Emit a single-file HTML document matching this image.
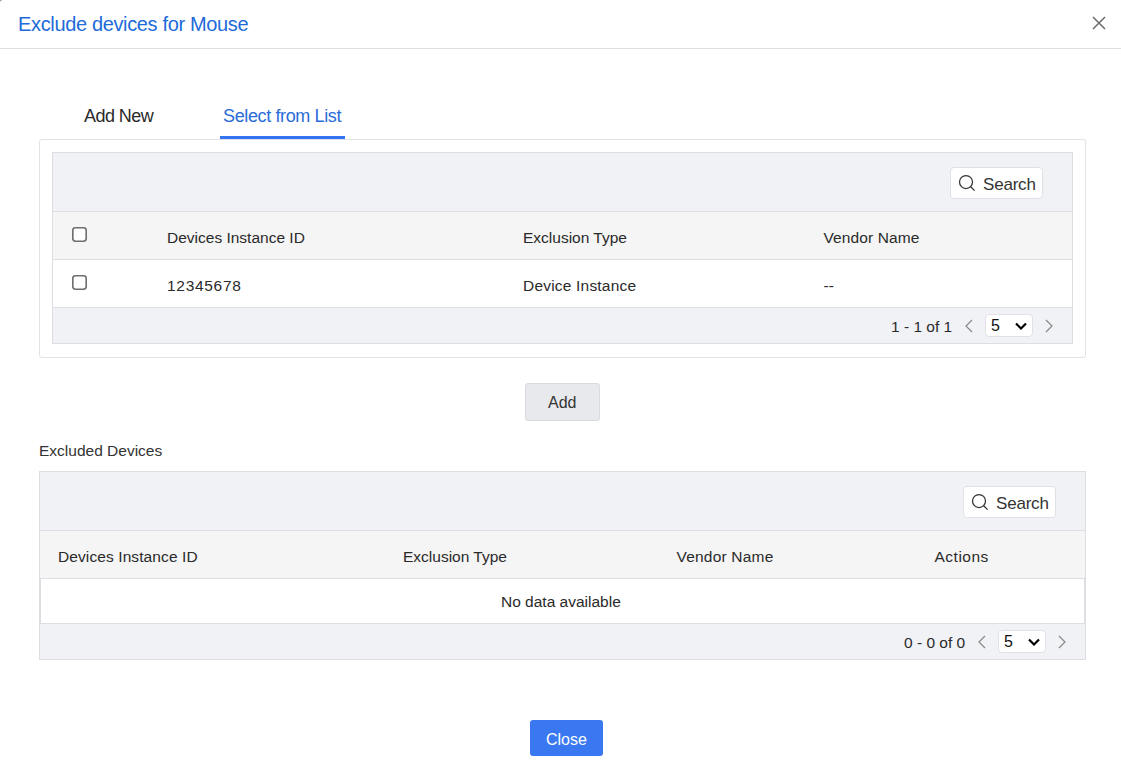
<!DOCTYPE html>
<html>
<head>
<meta charset="utf-8">
<style>
html,body{margin:0;padding:0;}
body{width:1121px;height:782px;overflow:hidden;background:#8e939c;position:relative;font-family:"Liberation Sans",sans-serif;color:#333;}
.modal{position:absolute;left:0;top:0;width:1121px;height:782px;background:#fff;border-top-left-radius:3px;}
.abs{position:absolute;white-space:nowrap;}
.t{position:absolute;white-space:nowrap;line-height:1;}
.hdrline{position:absolute;left:0;top:48px;width:1121px;height:1px;background:#dcdee4;}
.title{left:18px;top:14px;font-size:20px;letter-spacing:-0.35px;color:#216bd9;}
.closex{position:absolute;left:1091px;top:15px;width:16px;height:16px;}
.tab{font-size:18px;}
.tabline{position:absolute;left:220px;top:136px;width:125px;height:3px;background:#3474f0;}
.card{position:absolute;left:39px;top:139px;width:1045px;height:217px;border:1px solid #e1e3e8;border-radius:3px;background:#fff;}
.tbl{position:absolute;border:1px solid #dcdee3;box-sizing:border-box;}
.bar{position:absolute;left:0;width:100%;background:#f1f2f6;}
.head{position:absolute;left:0;width:100%;background:#f5f5f5;border-top:1px solid #dcdee3;border-bottom:1px solid #dcdee3;box-sizing:border-box;}
.row{position:absolute;background:#fff;box-sizing:border-box;}
.cb{position:absolute;width:15px;height:15px;}
.search{position:absolute;width:91px;height:30px;border:1px solid #dfe1e6;border-radius:4px;background:#fff;}
.search svg{position:absolute;left:7px;top:6px;}
.search span{position:absolute;left:32px;top:8px;font-size:17px;letter-spacing:-0.2px;line-height:1;color:#333;}
.cell{font-size:15.5px;color:#2a2a2a;}
.sel{position:absolute;width:46px;height:21px;border:1px solid #dfe1e6;border-radius:4px;background:#fff;}
.sel span{position:absolute;left:5px;top:3px;font-size:16px;line-height:1;color:#111;}
.btn-add{position:absolute;left:525px;top:383px;width:73px;height:36px;border:1px solid #d8dadf;border-radius:3px;background:#e8e9ed;}
.btn-close{position:absolute;left:530px;top:720px;width:73px;height:36px;border-radius:3px;background:#3a78f2;}
</style>
</head>
<body>
<div class="modal">
  <div class="t title">Exclude devices for Mouse</div>
  <svg class="closex" viewBox="0 0 16 16"><path d="M2 2 L14 14 M14 2 L2 14" stroke="#6b6b6b" stroke-width="1.5" fill="none"/></svg>
  <div class="hdrline"></div>

  <div class="t tab" style="left:84px;top:107px;letter-spacing:-0.55px;color:#2a2a2a;">Add New</div>
  <div class="t tab" style="left:223px;top:107px;letter-spacing:-0.37px;color:#2a6cd8;">Select from List</div>
  <div class="tabline"></div>

  <div class="card"></div>
  <!-- upper table -->
  <div class="tbl" style="left:52px;top:152px;width:1021px;height:192px;background:#f1f2f6;">
    <div class="head" style="top:58px;height:49px;"></div>
    <div class="row" style="left:0;top:107px;width:1019px;height:48px;border-bottom:1px solid #dcdee3;"></div>
    <div class="search" style="left:897px;top:14px;">
      <svg width="20" height="20" viewBox="0 0 20 20"><circle cx="8" cy="8" r="6.5" stroke="#333" stroke-width="1.25" fill="none"/><path d="M12.7 12.7 L16.6 16.6" stroke="#333" stroke-width="1.3"/></svg>
      <span>Search</span>
    </div>
  </div>
  <div class="cb" style="left:72px;top:227px;"><svg width="15" height="15" viewBox="0 0 15 15"><rect x="0.8" y="0.8" width="13.4" height="13.4" rx="2.6" fill="#fff" stroke="#6e6e6e" stroke-width="1.6"/></svg></div>
  <div class="cb" style="left:72px;top:275px;"><svg width="15" height="15" viewBox="0 0 15 15"><rect x="0.8" y="0.8" width="13.4" height="13.4" rx="2.6" fill="#fff" stroke="#6e6e6e" stroke-width="1.6"/></svg></div>
  <div class="t cell" style="left:167px;top:230px;">Devices Instance ID</div>
  <div class="t cell" style="left:523px;top:230px;">Exclusion Type</div>
  <div class="t cell" style="left:823.5px;top:230px;letter-spacing:0.1px;">Vendor Name</div>
  <div class="t cell" style="left:167px;top:278px;letter-spacing:0.7px;">12345678</div>
  <div class="t cell" style="left:523px;top:278px;letter-spacing:0.2px;">Device Instance</div>
  <div class="t cell" style="left:823.5px;top:278px;">--</div>
  <div class="t cell" style="left:891px;top:319px;">1 - 1 of 1</div>
  <svg class="abs" style="left:964px;top:318px;" width="10" height="16" viewBox="0 0 10 16"><path d="M8 2 L2 8 L8 14" stroke="#888" stroke-width="1.2" fill="none"/></svg>
  <div class="sel" style="left:985px;top:314px;"><span>5</span>
    <svg class="abs" style="left:29px;top:6.5px;" width="12" height="8" viewBox="0 0 12 8"><path d="M1 1.5 L6 6.5 L11 1.5" stroke="#000" stroke-width="2.2" fill="none"/></svg>
  </div>
  <svg class="abs" style="left:1044px;top:318px;" width="10" height="16" viewBox="0 0 10 16"><path d="M2 2 L8 8 L2 14" stroke="#888" stroke-width="1.2" fill="none"/></svg>

  <div class="btn-add"></div>
  <div class="t" style="left:548px;top:395px;font-size:16px;color:#333;">Add</div>

  <div class="t" style="left:39px;top:443px;font-size:15.5px;color:#333;">Excluded Devices</div>

  <!-- lower table -->
  <div class="tbl" style="left:39px;top:471px;width:1047px;height:189px;background:#f1f2f6;">
    <div class="head" style="top:58px;height:49px;"></div>
    <div class="row" style="left:0;top:107px;width:1045px;height:45px;border:1px solid #dcdee3;border-top:none;"></div>
    <div class="search" style="left:923px;top:14px;">
      <svg width="20" height="20" viewBox="0 0 20 20"><circle cx="8" cy="8" r="6.5" stroke="#333" stroke-width="1.25" fill="none"/><path d="M12.7 12.7 L16.6 16.6" stroke="#333" stroke-width="1.3"/></svg>
      <span>Search</span>
    </div>
  </div>
  <div class="t cell" style="left:58px;top:549px;letter-spacing:0.1px;">Devices Instance ID</div>
  <div class="t cell" style="left:403px;top:549px;">Exclusion Type</div>
  <div class="t cell" style="left:676.5px;top:549px;letter-spacing:0.2px;">Vendor Name</div>
  <div class="t cell" style="left:934.5px;top:549px;letter-spacing:0.5px;">Actions</div>
  <div class="t cell" style="left:501px;top:594px;">No data available</div>
  <div class="t cell" style="left:904px;top:635px;">0 - 0 of 0</div>
  <svg class="abs" style="left:977px;top:634px;" width="10" height="16" viewBox="0 0 10 16"><path d="M8 2 L2 8 L8 14" stroke="#888" stroke-width="1.2" fill="none"/></svg>
  <div class="sel" style="left:998px;top:630px;"><span>5</span>
    <svg class="abs" style="left:29px;top:6.5px;" width="12" height="8" viewBox="0 0 12 8"><path d="M1 1.5 L6 6.5 L11 1.5" stroke="#000" stroke-width="2.2" fill="none"/></svg>
  </div>
  <svg class="abs" style="left:1057px;top:634px;" width="10" height="16" viewBox="0 0 10 16"><path d="M2 2 L8 8 L2 14" stroke="#888" stroke-width="1.2" fill="none"/></svg>

  <div class="btn-close"></div>
  <div class="t" style="left:546px;top:732px;font-size:16px;color:#fff;">Close</div>
</div>
</body>
</html>
